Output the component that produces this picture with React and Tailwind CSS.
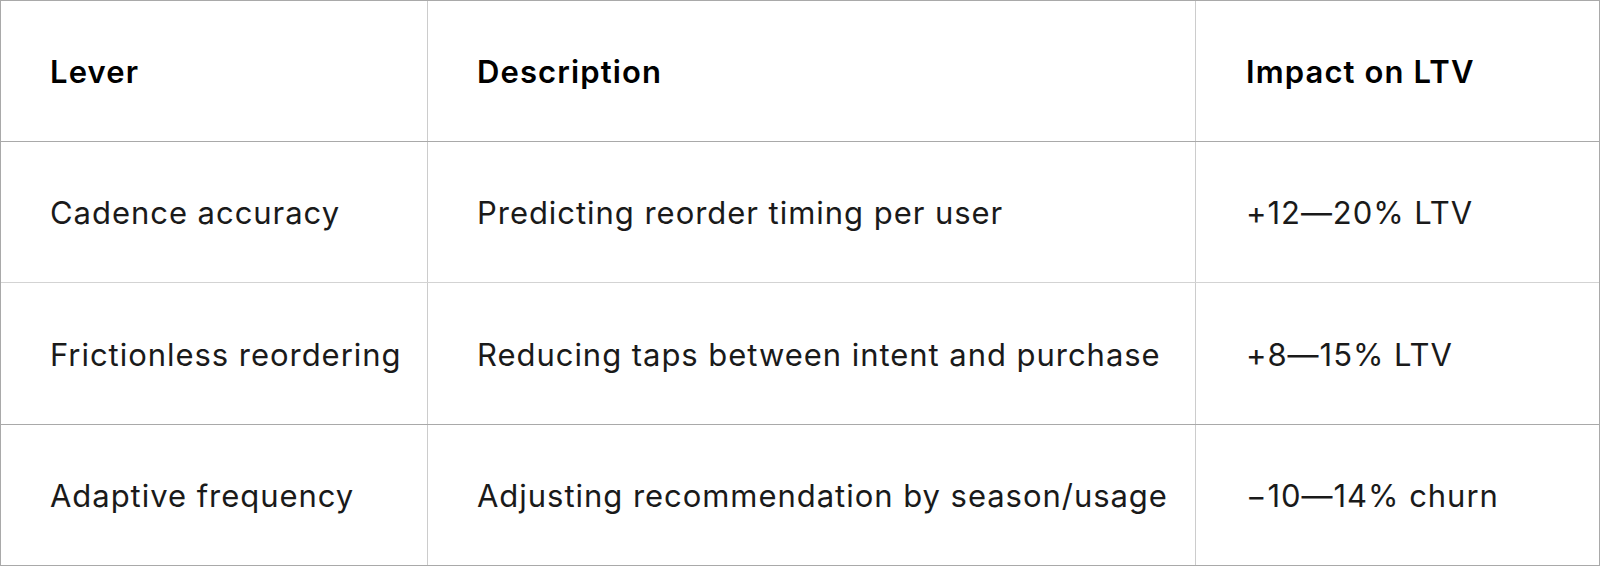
import React from "react";

const rows = [
  ["Cadence accuracy", "Predicting reorder timing per user", "+12—20% LTV"],
  ["Frictionless reordering", "Reducing taps between intent and purchase", "+8—15% LTV"],
  ["Adaptive frequency", "Adjusting recommendation by season/usage", "−10—14% churn"],
];

// line under each row: header / row1 / row2 (last row uses the outer border)
const lineColors = ["border-[#a9a9a9]", "border-[#d3d3d3]", "border-[#a9a9a9]"];

const App = () => {
  return (
    <div
      className="w-[1600px] h-[566px] bg-white border border-[#a9a9a9] flex flex-col text-[#1a1a1a]"
      style={{ fontFamily: "Inter, 'Noto Sans', sans-serif" }}
    >
      <div className={`flex h-[141px] border-b ${lineColors[0]}`}>
        <div className="w-[427px] shrink-0 border-r border-[#cccccc] flex items-center pl-[49px] pt-[3px] text-[31px] font-semibold text-black tracking-[0.036em]">
          Lever
        </div>
        <div className="w-[768px] shrink-0 border-r border-[#cccccc] flex items-center pl-[49px] pt-[3px] text-[31px] font-semibold text-black tracking-[0.036em]">
          Description
        </div>
        <div className="flex-1 flex items-center pl-[50px] pt-[3px] text-[31px] font-semibold text-black tracking-[0.036em]">
          Impact on LTV
        </div>
      </div>
      {rows.map((r, i) => (
        <div
          key={i}
          className={`flex flex-1 ${i < 2 ? "border-b " + lineColors[i + 1] : ""}`}
        >
          <div className="w-[427px] shrink-0 border-r border-[#cccccc] flex items-center pl-[49px] pt-[3px] text-[31px] tracking-[0.031em]">
            {r[0]}
          </div>
          <div className="w-[768px] shrink-0 border-r border-[#cccccc] flex items-center pl-[49px] pt-[3px] text-[31px] tracking-[0.031em]">
            {r[1]}
          </div>
          <div className="flex-1 flex items-center pl-[50px] pt-[3px] text-[31px] tracking-[0.031em]">
            {r[2]}
          </div>
        </div>
      ))}
    </div>
  );
};

export default App;
